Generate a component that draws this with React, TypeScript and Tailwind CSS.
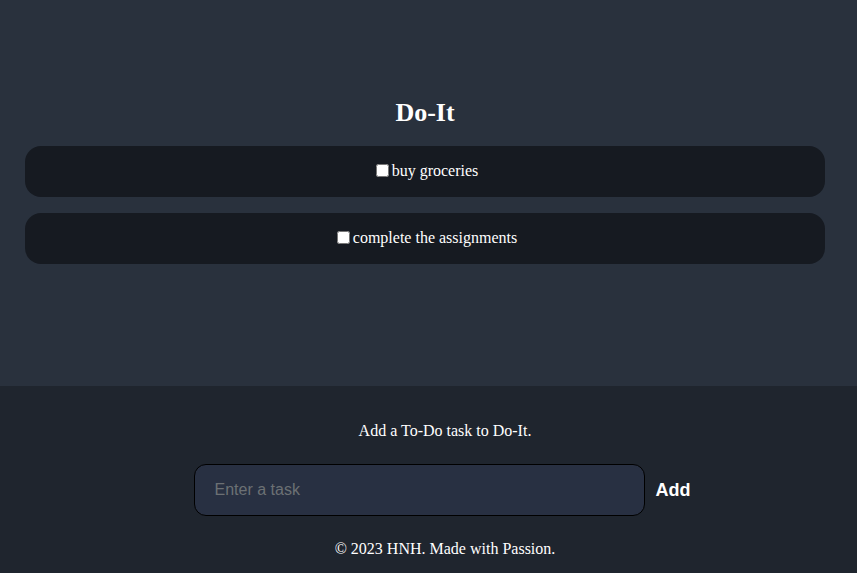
import React, { useState } from "react";

const serif = "font-['Liberation_Serif','Times_New_Roman',serif]";

export default function App() {
    const [tasks] = useState(["buy groceries", "complete the assignments"]);

    return (
        <div className={`min-h-screen flex flex-col bg-[#29313d] text-white ${serif}`}>
            <main className="flex-1 pl-[25px] pr-[32px] pt-[98px]">
                <h1 className="text-center text-[26px] font-bold leading-[30px]">Do-It</h1>
                <ul className="mt-[18px] flex flex-col gap-4">
                    {tasks.map((t) => (
                        <li
                            key={t}
                            className="h-[51px] rounded-2xl bg-[#161a21] flex items-center justify-center pb-[2px] text-base"
                        >
                            <label className="flex items-center">
                                <input type="checkbox" className="w-[13px] h-[13px] mr-[3px] ml-[4px]" />
                                {t}
                            </label>
                        </li>
                    ))}
                </ul>
            </main>
            <footer className="h-[187px] bg-[#1f252e] flex flex-col items-center pt-[36px] pl-[33px]">
                <p className="text-base leading-[18px]">Add a To-Do task to Do-It.</p>
                <div className="mt-[24px] flex items-center mr-[6px]">
                    <input
                        type="text"
                        placeholder="Enter a task"
                        className="w-[451px] h-[52px] rounded-xl border border-black bg-[#283042] px-5 text-base text-white placeholder:text-[#6c7074] font-['Liberation_Sans',Arial,sans-serif] outline-none"
                    />
                    <button className="ml-[11px] text-lg font-bold font-['Liberation_Sans',Arial,sans-serif]">
                        Add
                    </button>
                </div>
                <p className="mt-[24px] text-base leading-[18px]">© 2023 HNH. Made with Passion.</p>
            </footer>
        </div>
    );
}
